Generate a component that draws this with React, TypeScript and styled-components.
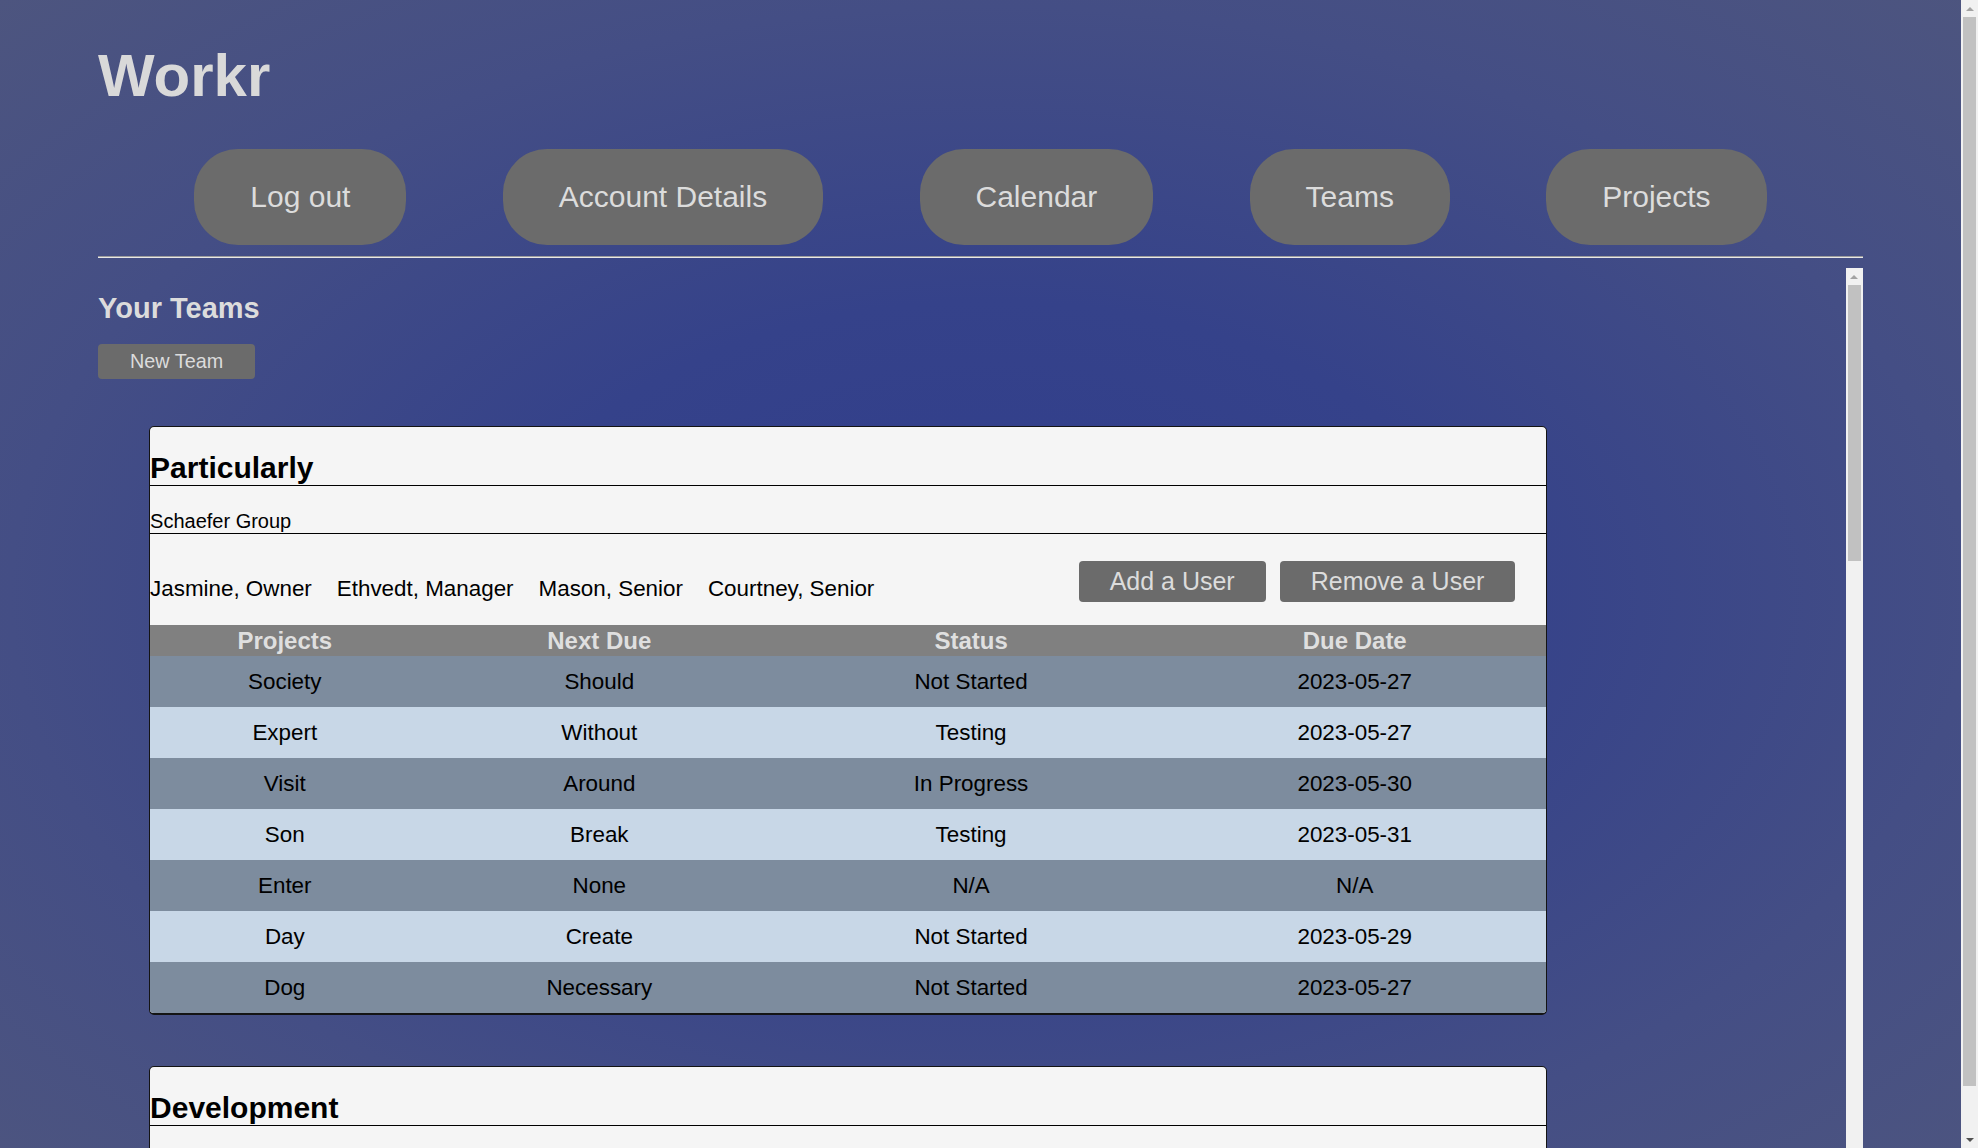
import React from "react";
import styled, { createGlobalStyle } from "styled-components";

const GlobalStyle = createGlobalStyle`
  html, body {
    margin: 0;
    padding: 0;
    height: 100%;
    overflow: hidden;
  }
  body {
    font-family: "Liberation Sans", Arial, Helvetica, sans-serif;
    background: radial-gradient(ellipse at 50% 52%, #303d8c 0%, #35428a 35%, #444e85 70%, #4d557f 100%);
  }
  * {
    scrollbar-width: none;
  }
`;

/* ---------- window chrome: a classic scrollbar drawing ---------- */

const Shell = styled.div`
  display: flex;
  height: 100vh;
  overflow: hidden;
`;

const Viewport = styled.div`
  flex: 1;
  min-width: 0;
  overflow: hidden;
`;

const ScrollbarRail = styled.div`
  flex: 0 0 17px;
  width: 17px;
  display: flex;
  flex-direction: column;
  background: #f1f1f1;
`;

const ArrowCell = styled.div`
  flex: 0 0 17px;
  height: 17px;
  display: flex;
  align-items: center;
  justify-content: center;
`;

const Arrow = styled.span<{ $down?: boolean; $active?: boolean }>`
  width: 0;
  height: 0;
  border-left: 4px solid transparent;
  border-right: 4px solid transparent;
  ${(p) =>
    p.$down
      ? `border-top: 4px solid ${p.$active ? "#505050" : "#a3a3a3"};`
      : `border-bottom: 4px solid ${p.$active ? "#505050" : "#a3a3a3"};`}
`;

const Track = styled.div`
  flex: 1;
  min-height: 0;
  padding: 0 2px;
`;

const Thumb = styled.div`
  background: #c1c1c1;
`;

function Scrollbar({ thumb, offset = 0 }: { thumb: number; offset?: number }) {
  return (
    <ScrollbarRail>
      <ArrowCell>
        <Arrow />
      </ArrowCell>
      <Track>
        <Thumb style={{ height: thumb, marginTop: offset }} />
      </Track>
      <ArrowCell>
        <Arrow $down $active />
      </ArrowCell>
    </ScrollbarRail>
  );
}

/* ---------- page ---------- */

const Page = styled.div`
  width: 90%;
  margin: 0 auto;
  padding-bottom: 10px;
`;

const Brand = styled.h1`
  margin: 41px 0 39px;
  font-size: 60px;
  font-weight: 700;
  line-height: normal;
  color: #d9d9d9;
`;

const Nav = styled.nav`
  display: flex;
  justify-content: space-evenly;
  align-items: center;
  margin-bottom: 11px;
`;

const NavButton = styled.button`
  font-family: inherit;
  font-size: 30px;
  line-height: normal;
  color: #dcdcdc;
  background: #6b6b6b;
  border: none;
  border-radius: 44px;
  padding: 31px 56px;
  cursor: pointer;
`;

const Divider = styled.hr`
  margin: 0 0 10px;
  height: 0;
  border: 0;
  border-top: 1px solid #9c9c9c;
  border-bottom: 1px solid #e8e8e8;
`;

const ScrollPane = styled.div`
  display: flex;
  height: 80vh;
`;

const PaneContent = styled.main`
  flex: 1;
  min-width: 0;
  overflow-y: auto;
  &::-webkit-scrollbar {
    display: none;
  }
`;

const SectionTitle = styled.h2`
  margin: 24px 0 19px;
  font-size: 29px;
  font-weight: 700;
  line-height: normal;
  color: #dcdcdc;
`;

const SmallButton = styled.button<{ $size: number }>`
  font-family: inherit;
  font-size: ${(p) => p.$size}px;
  line-height: normal;
  color: #dcdcdc;
  background: #6b6b6b;
  border: none;
  border-radius: 4px;
  padding: 6px 31px;
  cursor: pointer;
`;

const NewTeamButton = styled(SmallButton)`
  padding: 6px 32px;
`;

const TeamList = styled.div`
  display: flex;
  flex-direction: column;
  gap: 51px;
  width: 80%;
  margin: 47px 0 52px 51px;
`;

const TeamCard = styled.section`
  background: #f5f5f5;
  border: 1px solid #141414;
  border-bottom-width: 2px;
  border-radius: 5px;
  overflow: hidden;
`;

const TeamName = styled.h3`
  margin: 24px 0 0;
  font-size: 30px;
  font-weight: 700;
  line-height: normal;
  color: #000;
  border-bottom: 1px solid #000;
`;

const Company = styled.div`
  margin-top: 24px;
  font-size: 20px;
  line-height: normal;
  color: #000;
  border-bottom: 1px solid #000;
`;

const MembersRow = styled.div`
  display: flex;
  justify-content: space-between;
  align-items: flex-end;
  padding: 27px 31px 23px 0;
`;

const Members = styled.div`
  display: flex;
  gap: 25px;
  font-size: 22.4px;
  line-height: normal;
  color: #000;
`;

const Actions = styled.div`
  display: flex;
  gap: 14px;
`;

const Table = styled.table`
  width: 100%;
  border-collapse: collapse;
  table-layout: fixed;
`;

const Th = styled.th<{ $w: string }>`
  width: ${(p) => p.$w};
  background: #808080;
  color: #dfdfdf;
  font-size: 24px;
  font-weight: 700;
  line-height: normal;
  height: 31px;
  padding: 0;
  text-align: center;
`;

const Row = styled.tr`
  height: 51px;
  background: #7d8c9e;
  &:nth-child(even) {
    background: #c8d7e7;
  }
`;

const Td = styled.td`
  padding: 0;
  text-align: center;
  font-size: 22.4px;
  line-height: normal;
  color: #000;
`;

type Project = [string, string, string, string];

interface Team {
  name: string;
  company: string;
  members: string[];
  projects: Project[];
}

const teams: Team[] = [
  {
    name: "Particularly",
    company: "Schaefer Group",
    members: ["Jasmine, Owner", "Ethvedt, Manager", "Mason, Senior", "Courtney, Senior"],
    projects: [
      ["Society", "Should", "Not Started", "2023-05-27"],
      ["Expert", "Without", "Testing", "2023-05-27"],
      ["Visit", "Around", "In Progress", "2023-05-30"],
      ["Son", "Break", "Testing", "2023-05-31"],
      ["Enter", "None", "N/A", "N/A"],
      ["Day", "Create", "Not Started", "2023-05-29"],
      ["Dog", "Necessary", "Not Started", "2023-05-27"],
    ],
  },
  {
    name: "Development",
    company: "Kuhn and Sons",
    members: ["Mason, Owner", "Jasmine, Manager", "Courtney, Junior"],
    projects: [
      ["Market", "Report", "In Progress", "2023-05-28"],
      ["Picture", "Review", "Testing", "2023-05-30"],
      ["Garden", "None", "N/A", "N/A"],
      ["Letter", "Draft", "Not Started", "2023-06-01"],
      ["Window", "Design", "In Progress", "2023-05-29"],
      ["Season", "Deploy", "Testing", "2023-06-02"],
      ["Travel", "Plan", "Not Started", "2023-05-31"],
      ["Record", "Audit", "In Progress", "2023-06-03"],
    ],
  },
  {
    name: "Research",
    company: "Hartmann Inc",
    members: ["Courtney, Owner", "Ethvedt, Senior", "Mason, Junior"],
    projects: [
      ["Science", "Survey", "In Progress", "2023-05-30"],
      ["Theory", "Outline", "Not Started", "2023-06-04"],
      ["Method", "None", "N/A", "N/A"],
      ["Sample", "Collect", "Testing", "2023-05-28"],
      ["Result", "Analyze", "In Progress", "2023-06-01"],
      ["Paper", "Write", "Not Started", "2023-06-05"],
      ["Model", "Train", "Testing", "2023-05-29"],
      ["Detail", "Check", "Not Started", "2023-06-02"],
    ],
  },
  {
    name: "Marketing",
    company: "Bauer Partners",
    members: ["Ethvedt, Owner", "Courtney, Manager", "Jasmine, Senior"],
    projects: [
      ["Campaign", "Launch", "In Progress", "2023-05-31"],
      ["Brand", "Refresh", "Testing", "2023-06-02"],
      ["Social", "Post", "Not Started", "2023-05-28"],
      ["Event", "None", "N/A", "N/A"],
      ["Email", "Schedule", "In Progress", "2023-06-03"],
      ["Print", "Order", "Not Started", "2023-06-06"],
      ["Video", "Edit", "Testing", "2023-05-30"],
    ],
  },
];

const columns: [string, string][] = [
  ["Projects", "19.3%"],
  ["Next Due", "25.75%"],
  ["Status", "27.5%"],
  ["Due Date", "27.45%"],
];

function TeamPanel({ team }: { team: Team }) {
  return (
    <TeamCard>
      <TeamName>{team.name}</TeamName>
      <Company>{team.company}</Company>
      <MembersRow>
        <Members>
          {team.members.map((m) => (
            <span key={m}>{m}</span>
          ))}
        </Members>
        <Actions>
          <SmallButton $size={25}>Add a User</SmallButton>
          <SmallButton $size={25}>Remove a User</SmallButton>
        </Actions>
      </MembersRow>
      <Table>
        <thead>
          <tr>
            {columns.map(([label, w]) => (
              <Th key={label} $w={w}>
                {label}
              </Th>
            ))}
          </tr>
        </thead>
        <tbody>
          {team.projects.map((p, i) => (
            <Row key={i}>
              {p.map((cell, j) => (
                <Td key={j}>{cell}</Td>
              ))}
            </Row>
          ))}
        </tbody>
      </Table>
    </TeamCard>
  );
}

export default function App() {
  return (
    <>
      <GlobalStyle />
      <Shell>
        <Viewport>
          <Page>
            <Brand>Workr</Brand>
            <Nav>
              <NavButton>Log out</NavButton>
              <NavButton>Account Details</NavButton>
              <NavButton>Calendar</NavButton>
              <NavButton>Teams</NavButton>
              <NavButton>Projects</NavButton>
            </Nav>
            <Divider />
            <ScrollPane>
              <PaneContent>
                <SectionTitle>Your Teams</SectionTitle>
                <NewTeamButton $size={19.8}>New Team</NewTeamButton>
                <TeamList>
                  {teams.map((t) => (
                    <TeamPanel key={t.name} team={t} />
                  ))}
                </TeamList>
              </PaneContent>
              <Scrollbar thumb={276} />
            </ScrollPane>
          </Page>
        </Viewport>
        <Scrollbar thumb={1069} />
      </Shell>
    </>
  );
}
